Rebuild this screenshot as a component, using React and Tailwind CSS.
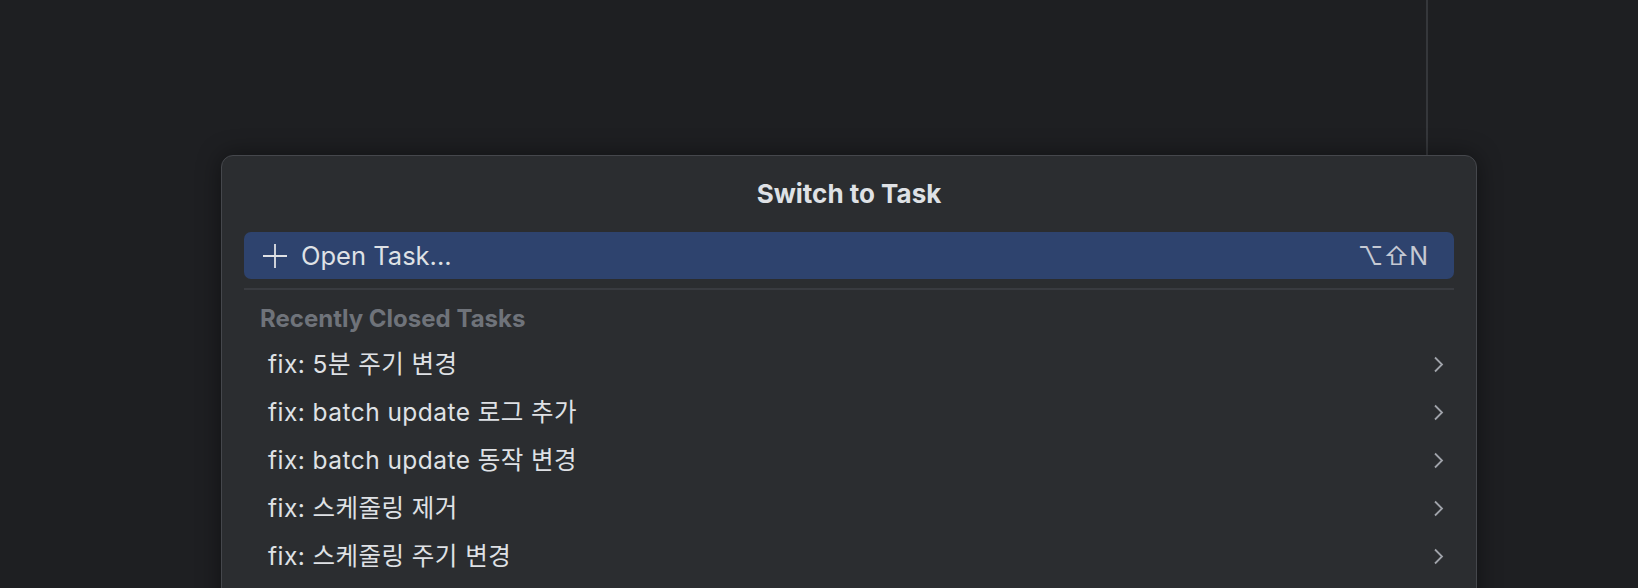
const tasks = [
  "fix: 5분 주기 변경",
  "fix: batch update 로그 추가",
  "fix: batch update 동작 변경",
  "fix: 스케줄링 제거",
  "fix: 스케줄링 주기 변경",
];

function Chevron() {
  return (
    <svg width="11" height="17" viewBox="0 0 11 17" fill="none">
      <path d="M2 1.5 L9 8.5 L2 15.5" stroke="#a0a3aa" strokeWidth="1.8" />
    </svg>
  );
}

function PlusIcon() {
  return (
    <svg width="26" height="26" viewBox="0 0 26 26" fill="none">
      <path d="M13 1 V25 M1 13 H25" stroke="#dfe1e5" strokeWidth="1.8" />
    </svg>
  );
}

function TaskRow({title}) {
  return (
    <div className="flex h-[48px] items-center justify-between pl-[24px] pr-[10px]">
      <span className="text-[24.5px] leading-[30px] tracking-[0.45px] text-[#dfe1e5]">{title}</span>
      <Chevron />
    </div>
  );
}

export default function App() {
  return (
    <div
      className="relative h-[588px] w-[1638px] overflow-hidden bg-[#1e1f22] pl-[221px] pt-[155px]"
      style={{fontFamily: "Inter, 'Noto Sans CJK KR', sans-serif"}}
    >
      {/* editor right margin guide */}
      <div className="absolute left-[1426px] top-0 h-[160px] w-[2px] bg-[#35373b]" />

      <div className="relative h-[460px] w-[1256px] rounded-[12px] border border-[#45474c] bg-[#2b2d30] shadow-[0_0_24px_rgba(0,0,0,0.45)]">
        <div className="pt-[23px] text-center text-[26px] font-bold leading-[30px] text-[#dfe1e5]">
          Switch to Task
        </div>

        <div className="mx-[22px] mt-[23px] flex h-[47px] items-center justify-between rounded-[7px] bg-[#2e436e] pl-[18px] pr-[26px]">
          <div className="flex items-center gap-[13px]">
            <PlusIcon />
            <span className="text-[25.5px] leading-[30px] text-[#dfe1e5]">Open Task...</span>
          </div>
          <span className="text-[25px] leading-[30px] text-[#c5c9d3]">⌥⇧N</span>
        </div>

        <div className="mx-[22px] mt-[9px] h-[2px] bg-[#393b40]" />

        <div className="mx-[22px]">
          <div className="pl-[16px] pt-[15px] pb-[7px] text-[24px] font-bold leading-[28px] text-[#6f737a]">
            Recently Closed Tasks
          </div>
          {tasks.map((t) => (
            <TaskRow key={t} title={t} />
          ))}
        </div>
      </div>
    </div>
  );
}
